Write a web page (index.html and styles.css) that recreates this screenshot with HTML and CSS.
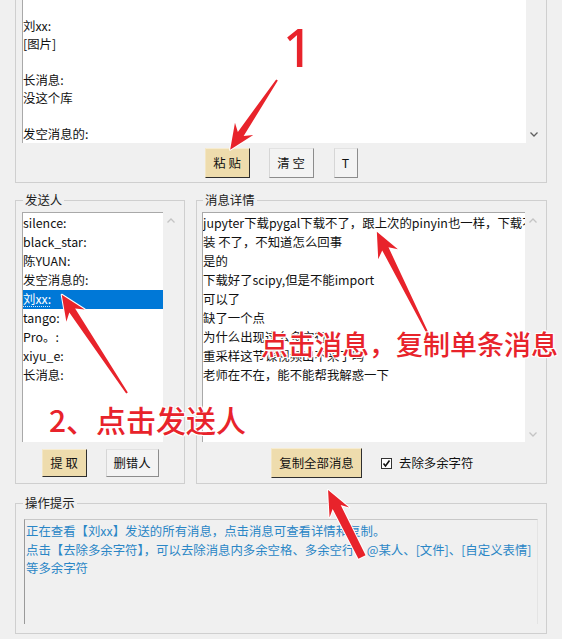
FILE: index.html
```html
<!DOCTYPE html>
<html lang="zh-CN">
<head>
<meta charset="utf-8">
<title>消息提取</title>
<link rel="stylesheet" href="styles.css">
</head>
<body>
<div class="window">
  <div class="group group-top">
    <div class="textbox top-text">
      <div class="tb-content">
        <div class="line">&nbsp;</div>
        <div class="line">刘xx:</div>
        <div class="line">[图片]</div>
        <div class="line">&nbsp;</div>
        <div class="line">长消息:</div>
        <div class="line">没这个库</div>
        <div class="line">&nbsp;</div>
        <div class="line">发空消息的:</div>
      </div>
      <div class="vscroll end">
        <svg class="chev" width="8" height="5" viewBox="0 0 8 5"><polyline points="0.5,0.5 4,4 7.5,0.5" fill="none" stroke="#606060" stroke-width="1.3"/></svg>
      </div>
    </div>
    <div class="btn-row center">
      <button class="btn tan w45">粘 贴</button>
      <button class="btn w45">清 空</button>
      <button class="btn w24 gap1">T</button>
    </div>
  </div>

  <div class="mid">
    <div class="group group-sender">
      <div class="legend">发送人</div>
      <div class="textbox list">
        <div class="tb-content items">
          <div class="item">silence:</div>
          <div class="item">black_star:</div>
          <div class="item">陈YUAN:</div>
          <div class="item">发空消息的:</div>
          <div class="item selected"><span class="focus">刘xx:</span></div>
          <div class="item">tango:</div>
          <div class="item">Pro。:</div>
          <div class="item">xiyu_e:</div>
          <div class="item">长消息:</div>
        </div>
        <div class="vscroll start">
          <svg class="chev" width="8" height="5" viewBox="0 0 8 5"><polyline points="0.5,4.5 4,1 7.5,4.5" fill="none" stroke="#c4c4c4" stroke-width="1.3"/></svg>
        </div>
      </div>
      <div class="btn-row center btns-sender">
        <button class="btn tan w45">提 取</button>
        <button class="btn w53">删错人</button>
      </div>
    </div>

    <div class="group group-msg">
      <div class="legend">消息详情</div>
      <div class="textbox msgs">
        <div class="tb-content items">
          <div class="item">jupyter下载pygal下载不了，跟上次的pinyin也一样，下载不了安</div>
          <div class="item">装 不了，不知道怎么回事</div>
          <div class="item">是的</div>
          <div class="item">下载好了scipy,但是不能import</div>
          <div class="item">可以了</div>
          <div class="item">缺了一个点</div>
          <div class="item">为什么出现这么多空行</div>
          <div class="item">重采样这节课视频出不来了吗</div>
          <div class="item">老师在不在，能不能帮我解惑一下</div>
        </div>
        <div class="vscroll between">
          <svg class="chev" width="8" height="5" viewBox="0 0 8 5"><polyline points="0.5,4.5 4,1 7.5,4.5" fill="none" stroke="#c4c4c4" stroke-width="1.3"/></svg>
          <svg class="chev" width="8" height="5" viewBox="0 0 8 5"><polyline points="0.5,0.5 4,4 7.5,0.5" fill="none" stroke="#c4c4c4" stroke-width="1.3"/></svg>
        </div>
      </div>
      <div class="btn-row msg-btns">
        <button class="btn tan w91">复制全部消息</button>
        <span class="check">
          <svg width="9" height="9" viewBox="0 0 9 9"><polyline points="1.5,4.5 3.5,7 7.5,1.5" fill="none" stroke="#111" stroke-width="1.6"/></svg>
        </span>
        <span class="check-label">去除多余字符</span>
      </div>
    </div>
  </div>

  <div class="group group-tips">
    <div class="legend">操作提示</div>
    <div class="tips">
      <div class="tip-line">正在查看【刘xx】发送的所有消息，点击消息可查看详情和复制。</div>
      <div class="tip-line">点击【去除多余字符】，可以去除消息内多余空格、多余空行、@某人、[文件]、[自定义表情]</div>
      <div class="tip-line">等多余字符</div>
    </div>
  </div>

  <svg class="arrows" width="562" height="639" viewBox="0 0 562 639">
    <g fill="#e8232b" stroke="#ffffff" stroke-width="2" stroke-linejoin="round" paint-order="stroke">
      <polygon transform="translate(277 80) rotate(123.9)" points="0,-1 65,-3.5 59,-11 84,0 59,11 65,3.5 0,1"/>
      <polygon transform="translate(127 393) rotate(-123.6)" points="0,-1 99,-3.5 93,-11 118,0 93,11 99,3.5 0,1"/>
      <polygon transform="translate(427 332) rotate(-116.6)" points="0,-1 93,-3.5 87,-11 112,0 87,11 93,3.5 0,1"/>
      <polygon transform="translate(362 557) rotate(-116.9)" points="0,-4 56,-4.5 50,-11 75,0 50,11 56,4.5 0,4"/>
    </g>
  </svg>
  <div class="ann ann-1">1</div>
  <div class="ann ann-2">2、点击发送人</div>
  <div class="ann ann-3">点击消息，复制单条消息</div>
</div>
</body>
</html>
```

FILE: styles.css
```css
* { box-sizing: border-box; }
html, body { margin: 0; padding: 0; }
body {
  background: #f0f0f0;
  font-family: "Noto Sans CJK SC", "Microsoft YaHei", sans-serif;
  font-size: 12.4px;
  color: #111;
}
.window {
  position: relative;
  width: 562px;
  height: 639px;
  overflow: hidden;
  padding: 0 15px;
  background: #f0f0f0;
}

/* group boxes */
.group {
  border: 1px solid #cfcfcf;
  width: 532px;
}
.legend {
  width: max-content;
  line-height: 16px;
  height: 16px;
  margin-top: -9px;
  padding: 0 2px;
  background: #f0f0f0;
  color: #222;
}

/* text boxes */
.textbox {
  display: flex;
}
.tb-content {
  flex: 1;
  background: #fff;
  border-left: 1px solid #a9a9a9;
  border-top: 1px solid #a9a9a9;
  overflow: hidden;
}
.vscroll {
  width: 16px;
  display: flex;
  flex-direction: column;
  align-items: center;
}
.vscroll.end { justify-content: flex-end; padding-bottom: 6px; }
.vscroll.start { justify-content: flex-start; padding-top: 6px; }
.vscroll.between { justify-content: space-between; padding: 6px 0 5px; }
.chev { display: block; }

.line, .item {
  white-space: nowrap;
  overflow: hidden;
}
.line { height: 18px; line-height: 18px; }
.item { height: 19px; line-height: 19px; padding-left: 0; }

/* top group */
.group-top {
  margin-top: -12px;
  padding: 10px 0 4px 0;
}
.top-text {
  margin-left: 6px;
  width: 520px;
  height: 144px;
}
.top-text .tb-content { border-top: none; }

/* buttons */
.btn-row {
  display: flex;
  align-items: center;
}
.btn-row.center { justify-content: center; gap: 19px; }
.group-top .btn-row { margin-top: 5px; height: 30px; }
.btn {
  font-family: inherit;
  font-size: 12.4px;
  color: #111;
  height: 30px;
  padding: 0;
  background: #f3f3f3;
  border: 1px solid;
  border-color: #e2e2e2 #8c8c8c #8c8c8c #d6d6d6;
  border-radius: 0;
}
.btn.tan {
  background: #eedcad;
  border-color: #f7ecd0 #2e2e2e #2e2e2e #f3e6c4;
}
.w45 { width: 45px; }
.w24 { width: 24px; }
.w53 { width: 53px; }
.w91 { width: 91px; }
.gap1 { margin-left: 1px; }

/* middle row */
.mid {
  display: flex;
  gap: 11px;
  margin-top: 17px;
  width: 532px;
}
.group-sender {
  width: 170px;
  padding-bottom: 6px;
}
.group-sender .legend { margin-left: 7px; }
.list {
  margin: 4px 0 0 6px;
  width: 157px;
  height: 230px;
}
.items { padding-top: 1px; }
.selected {
  background: #0078d7;
  color: #fff;
}
.focus {
  text-decoration: underline dotted #cfe3f7;
  text-underline-offset: 2px;
}
.btns-sender { margin-top: 7px; height: 28px; }
.btns-sender .btn { height: 28px; }

.group-msg {
  width: 351px;
}
.group-msg .legend { margin-left: 6px; }
.msgs {
  margin: 4px 0 0 5px;
  width: 339px;
  height: 230px;
}
.msg-btns {
  margin-top: 6px;
  height: 30px;
  padding-left: 74px;
}
.check {
  margin-left: 19px;
  width: 11px;
  height: 11px;
  border: 1px solid #333;
  background: #fff;
  display: flex;
  align-items: center;
  justify-content: center;
}
.check svg { display: block; }
.check-label { margin-left: 7px; }

/* tips group */
.group-tips {
  margin-top: 19px;
  height: 131px;
}
.group-tips .legend { margin-left: 7px; }
.tips {
  margin: 8px 0 0 8px;
  width: 514px;
  height: 105px;
  border-top: 1px solid #c8c8c8;
  border-left: 1px solid #9a9a9a;
  border-right: 1px solid #e4e4e4;
  padding: 2px 0 0 1px;
  color: #2a86c6;
}
.tip-line {
  height: 18.5px;
  line-height: 18.5px;
  white-space: nowrap;
}

/* annotations */
.arrows {
  position: absolute;
  left: 0;
  top: 0;
  pointer-events: none;
}
.ann {
  position: absolute;
  color: #e8232b;
  font-family: "Noto Sans CJK SC", sans-serif;
  font-weight: 500;
  line-height: 1;
  white-space: nowrap;
  pointer-events: none;
  text-shadow: 1px 1px 0 #fff, -1px -1px 0 #fff, 1px -1px 0 #fff, -1px 1px 0 #fff, 0 0 3px #fff;
}
.ann-1 {
  left: 283px;
  top: 21px;
  font-family: "Noto Sans", sans-serif;
  font-size: 52px;
}
.ann-2 {
  left: 49px;
  top: 404px;
  font-size: 30px;
}
.ann-3 {
  left: 261px;
  top: 330px;
  font-size: 27px;
}
```
